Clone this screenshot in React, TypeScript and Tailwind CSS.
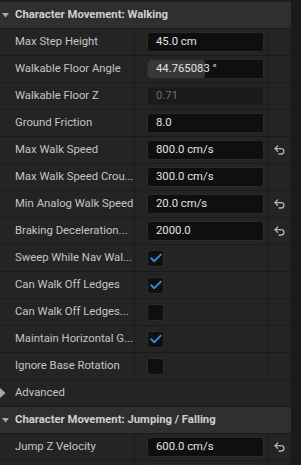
import React from 'react';

type Row =
  | { kind: 'num'; label: string; value: string; reset?: boolean; disabled?: boolean; slider?: number }
  | { kind: 'check'; label: string; checked: boolean };

const walking: Row[] = [
  { kind: 'num', label: 'Max Step Height', value: '45.0 cm' },
  { kind: 'num', label: 'Walkable Floor Angle', value: '44.765083 °', slider: 57 },
  { kind: 'num', label: 'Walkable Floor Z', value: '0.71', disabled: true },
  { kind: 'num', label: 'Ground Friction', value: '8.0' },
  { kind: 'num', label: 'Max Walk Speed', value: '800.0 cm/s', reset: true },
  { kind: 'num', label: 'Max Walk Speed Crou...', value: '300.0 cm/s' },
  { kind: 'num', label: 'Min Analog Walk Speed', value: '20.0 cm/s', reset: true },
  { kind: 'num', label: 'Braking Deceleration...', value: '2000.0', reset: true },
  { kind: 'check', label: 'Sweep While Nav Wal...', checked: true },
  { kind: 'check', label: 'Can Walk Off Ledges', checked: true },
  { kind: 'check', label: 'Can Walk Off Ledges...', checked: false },
  { kind: 'check', label: 'Maintain Horizontal G...', checked: true },
  { kind: 'check', label: 'Ignore Base Rotation', checked: false },
];

// last row is only partly in view, so it has no text
const jumping: Row[] = [
  { kind: 'num', label: 'Jump Z Velocity', value: '600.0 cm/s', reset: true },
  { kind: 'num', label: '', value: '' },
];

const ResetIcon = () => (
  <svg width="12" height="10" viewBox="0 0 12 10" fill="none" stroke="#b4b4b4" strokeWidth="1.3" strokeLinecap="round" strokeLinejoin="round">
    <path d="M3.6 1 1 3.6 3.6 6.2" />
    <path d="M1 3.6h6.2a2.7 2.7 0 0 1 0 5.4H5" />
  </svg>
);

const Header = ({ title }: { title: string }) => (
  <div className="h-[27px] flex items-center bg-[#2f2f2f] border-b border-[#1b1b1b]">
    <svg width="7" height="5" viewBox="0 0 7 5" className="ml-[2px]">
      <path d="M0 0h7L3.5 4.5z" fill="#a8a8a8" />
    </svg>
    <span className="ml-[6px] text-[11.3px] font-bold text-[#cfcfcf] whitespace-nowrap">{title}</span>
  </div>
);

const PropRow = ({ row }: { row: Row }) => (
  <div className="h-[27px] flex border-b border-[#1b1b1b] bg-[#242424]">
    <div className="w-[135px] shrink-0 flex items-center pl-[15px] border-r border-[#1b1b1b]">
      <span className="whitespace-nowrap text-[11.3px] text-[#c4c4c4]">{row.label}</span>
    </div>
    <div className="w-[133px] shrink-0 flex items-center pl-[12px] pr-[3px] border-r border-[#1b1b1b]">
      {row.kind === 'num' ? (
        <div
          className={`relative w-full h-[20px] rounded-[3px] border flex items-center overflow-hidden ${
            row.disabled ? 'bg-[#1a1a1a] border-[#262626]' : 'bg-[#0f0f0f] border-[#2a2a2a]'
          }`}
        >
          {row.slider !== undefined && (
            <div className="absolute left-0 top-0 bottom-0 bg-[#383838] rounded-[3px]" style={{ width: row.slider }} />
          )}
          <span className={`relative pl-[8px] text-[11.3px] ${row.disabled ? 'text-[#6e6e6e]' : 'text-[#e2e2e2]'}`}>
            {row.value}
          </span>
        </div>
      ) : (
        <div className="w-[17px] h-[17px] rounded-[3px] bg-[#0f0f0f] border border-[#2c2c2c] flex items-center justify-center">
          {row.checked && (
            <svg width="12" height="10" viewBox="0 0 12 10" fill="none" stroke="#2a8cf0" strokeWidth="1.9" strokeLinecap="round" strokeLinejoin="round">
              <path d="M1.2 5.2 4.3 8.2 10.8 1.6" />
            </svg>
          )}
        </div>
      )}
    </div>
    <div className="flex-1 flex items-center justify-center">{row.kind === 'num' && row.reset && <ResetIcon />}</div>
  </div>
);

export default function App() {
  return (
    <div className="w-[301px] h-[465px] overflow-hidden flex bg-[#1b1b1b]" style={{ fontFamily: 'Roboto, "Noto Sans", sans-serif' }}>
      <div className="w-[291px] shrink-0 border-t-2 border-[#1b1b1b]">
        <Header title="Character Movement: Walking" />
        {walking.map((r) => (
          <PropRow key={r.label} row={r} />
        ))}
        <div className="h-[27px] flex items-center bg-[#242424] border-b border-[#1b1b1b]">
          <svg width="6" height="10" viewBox="0 0 6 10">
            <path d="M0 0 5.5 5 0 10z" fill="#a8a8a8" />
          </svg>
          <span className="ml-[9px] text-[11.3px] text-[#c4c4c4]">Advanced</span>
        </div>
        <Header title="Character Movement: Jumping / Falling" />
        {jumping.map((r, i) => (
          <PropRow key={i} row={r} />
        ))}
      </div>
      <div className="flex-1 bg-[#1a1a1a]" />
    </div>
  );
}
